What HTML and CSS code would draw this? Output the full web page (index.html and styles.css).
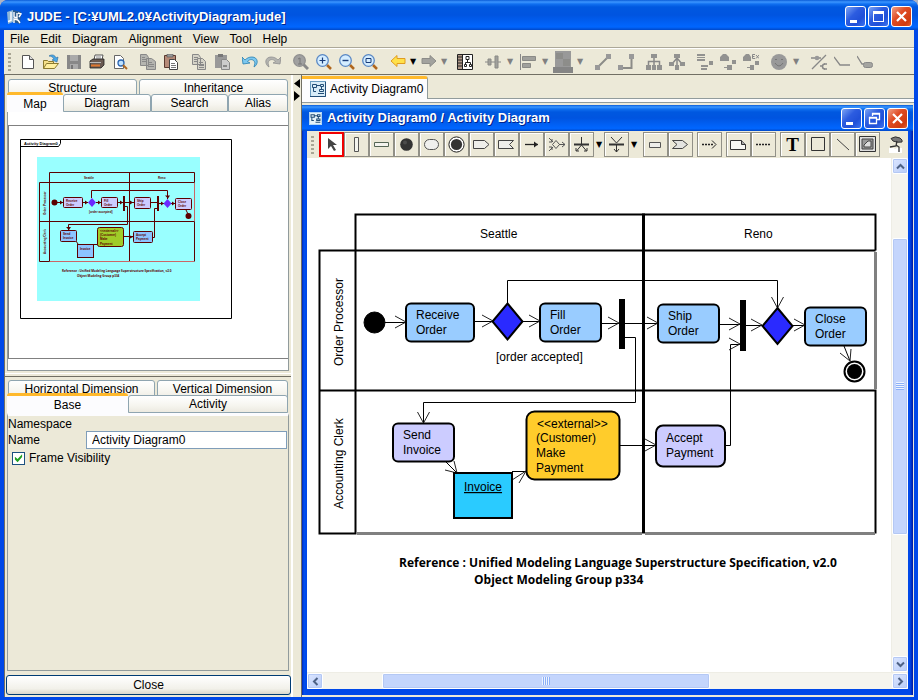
FILE: index.html
```html
<!DOCTYPE html>
<html lang="en">
<head>
<meta charset="utf-8">
<title>JUDE</title>
<link rel="stylesheet" href="styles.css">
</head>
<body>
<div class="window">
  <header class="titlebar">
    <svg class="app-icon" width="16" height="16" viewBox="0 0 16 16"><path d="M1 3l6-2v12l-5 2z" fill="#8fb8d8"/><path d="M7 1l8 2-1 12-7-2z" fill="#2a5a8c"/><path d="M5 3v8.500l-3 1M8 3v5l3 1V4M8 14v-4l4 1M12 4l3 1-2 3M12 11l2 3" fill="none" stroke="#fff" stroke-width="1.400"/></svg>
    <h1 class="title">JUDE - [C:¥UML2.0¥ActivityDiagram.jude]</h1>
    <div class="win-buttons">
      <button class="win-btn" aria-label="Minimize"><svg width="19" height="19" viewBox="0 0 19 19"><path d="M4 13h7v3H4z" fill="#fff"/></svg></button>
      <button class="win-btn" aria-label="Maximize"><svg width="19" height="19" viewBox="0 0 19 19"><path d="M4 4h11v11H4zM5 7v7h9V7z" fill="#fff" fill-rule="evenodd"/></svg></button>
      <button class="win-btn close" aria-label="Close window"><svg width="19" height="19" viewBox="0 0 19 19"><path d="M5 5l9 9M14 5l-9 9" stroke="#fff" stroke-width="2.200"/></svg></button>
    </div>
  </header>

  <div class="client">
    <nav class="menubar">
      <button>File</button><button>Edit</button><button>Diagram</button><button>Alignment</button><button>View</button><button>Tool</button><button>Help</button>
    </nav>

    <div class="toolbar">
      <span class="grip"></span>
      <div class="group">
        <button aria-label="New"><svg viewBox="0 0 16 16"><path d="M2.500 1.500h7l4 4v9h-11z" fill="#fff" stroke="#555"/><path d="M9.500 1.500v4h4" fill="#ddd" stroke="#555"/></svg></button>
        <button aria-label="Open"><svg viewBox="0 0 16 16"><path d="M.5 14.500v-8h4l1 1h5v2" fill="#f5e08a" stroke="#8a7a30"/><path d="M.5 14.500l3-5h12l-4 5z" fill="#fff0a0" stroke="#8a7a30"/><path d="M6 2c3-2 6-1 7 2l2-1-1 5-5-2 2-1C10 3 8 2 6 2z" fill="#49a8e8" stroke="#2a6a9c" stroke-width=".6"/></svg></button>
        <button aria-label="Save" disabled><svg viewBox="0 0 16 16"><path d="M1 1h14v14H1z" fill="#888"/><path d="M4 1h8v6H4zM4 10h8v5H4z" fill="#aaa"/><path d="M5 11h2v4H5z" fill="#777"/></svg></button>
        <button aria-label="Print"><svg viewBox="0 0 16 16"><path d="M5 6l1-5h8l-1 5" fill="#fff" stroke="#555"/><path d="M7 3h5M7 5h5" stroke="#888"/><path d="M1 7l3-2h11v6l-3 3H1z" fill="#6a5a52" stroke="#222" stroke-width=".8"/><path d="M1 8.500h11" stroke="#bbb"/><path d="M2 11.500h9" stroke="#e07830" stroke-width="2"/></svg></button>
        <button aria-label="Print preview"><svg viewBox="0 0 16 16"><path d="M2.500 1.500h6l3 3v10h-9z" fill="#fff" stroke="#666"/><circle cx="9" cy="9" r="3" fill="#bfe2ff" stroke="#2a64b0" stroke-width="1.300"/><path d="M11 11l4 4" stroke="#b06820" stroke-width="2"/></svg></button>
      </div>
      <div class="group">
        <button aria-label="Copy" disabled><svg viewBox="0 0 16 16"><path d="M.5.500h6l2 3v8h-8zM6.500 4.500h5l4 3v8h-9z" fill="#b5b5b0" stroke="#888"/><path d="M8 8.500h4M8 10.500h6M8 12.500h6M2 3.500h3M2 5.500h4M2 7.500h4" stroke="#888"/></svg></button>
        <button aria-label="Paste"><svg viewBox="0 0 16 16"><path d="M1.500 1.500h11v12h-11z" fill="#b58a78" stroke="#5a3a30"/><path d="M4 0h6v3H4z" fill="#999" stroke="#555" stroke-width=".6"/><path d="M6.500 5.500h5l3 3v7h-8z" fill="#fff" stroke="#444"/><path d="M8 9.500h4M8 11.500h5M8 13.500h5" stroke="#777"/></svg></button>
      </div>
      <div class="group">
        <button aria-label="Copy style" disabled><svg viewBox="0 0 16 16"><path d="M1.500.5h6l2 3v7h-8zM6.500 4.500h5l3 3v8h-8z" fill="#d5d3c8" stroke="#888"/><path d="M3 3.500h4M3 5.500h3M3 7.500h3M8 8.500h4M8 13.500h5" stroke="#888"/><path d="M8 10h5v2H8z" fill="#888"/></svg></button>
        <button aria-label="Paste style" disabled><svg viewBox="0 0 16 16"><path d="M1 1h12v13H1z" fill="#999"/><path d="M4 0h5v3H4z" fill="#777"/><path d="M7.500 5.500h5l3 3v7h-8z" fill="#ccc" stroke="#888"/><path d="M9 11h4v2H9z" fill="#888"/></svg></button>
      </div>
      <div class="group">
        <button aria-label="Undo"><svg viewBox="0 0 16 16"><path d="M0 3l1 7 7-1-2.500-1.500C8 4.500 12 5 13 9l-1 4c5-3 4-10-2-10-3 0-5 1-7 3z" fill="#7cc8f0" stroke="#2a80b0" stroke-width=".8"/></svg></button>
        <button aria-label="Redo" disabled><svg viewBox="0 0 16 16"><path d="M16 3l-1 7-7-1 2.500-1.500C8 4.500 4 5 3 9l1 4C-1 10 0 3 6 3c3 0 5 1 7 3z" fill="#b4b4b0" stroke="#909090" stroke-width=".8"/></svg></button>
      </div>
      <div class="group">
        <button aria-label="Actual size" disabled><svg viewBox="0 0 16 16"><path d="M10 10l5 5" stroke="#888" stroke-width="3"/><circle cx="6.500" cy="6.500" r="5.800" fill="#a0a0a0" stroke="#909090" stroke-width="1.300"/><path d="M5 5l2-1v6M5 10h4" fill="none" stroke="#777"/></svg></button>
        <button aria-label="Zoom in"><svg viewBox="0 0 16 16"><path d="M11 11l4 4" stroke="#b0661c" stroke-width="2.500"/><circle cx="6.500" cy="6.500" r="5.800" fill="#d4edff" stroke="#5a88c4" stroke-width="1.300"/><path d="M6.500 3.500v6M3.500 6.500h6" stroke="#1a3c78" stroke-width="1.200"/></svg></button>
        <button aria-label="Zoom out"><svg viewBox="0 0 16 16"><path d="M11 11l4 4" stroke="#b0661c" stroke-width="2.500"/><circle cx="6.500" cy="6.500" r="5.800" fill="#d4edff" stroke="#5a88c4" stroke-width="1.300"/><path d="M3.500 6.500h6" stroke="#1a3c78" stroke-width="1.400"/></svg></button>
        <button aria-label="Zoom to fit"><svg viewBox="0 0 16 16"><path d="M11 11l4 4" stroke="#b0661c" stroke-width="2.500"/><circle cx="6.500" cy="6.500" r="5.800" fill="#d4edff" stroke="#5a88c4" stroke-width="1.300"/><path d="M4 4.500h5v4H4z" fill="none" stroke="#1a3c78"/></svg></button>
      </div>
      <div class="group">
        <button aria-label="Back"><svg viewBox="0 0 16 16"><path d="M1 7L7 1.500v3h8v5H7v3z" fill="#ffe14a" stroke="#e09c20"/></svg></button>
        <button class="caret tight" aria-label="Back history">▼</button>
        <button aria-label="Forward" disabled><svg viewBox="0 0 16 16"><path d="M15 7L9 1.500v3H1v5h8v3z" fill="#a2a29e" stroke="#8c8c88"/></svg></button>
        <button class="caret tight" aria-label="Forward history" disabled>▼</button>
      </div>
      <div class="group">
        <button aria-label="Show in tree"><svg viewBox="0 0 16 16"><path d="M.5.5h15v15H.5z" fill="#fff" stroke="#222"/><path d="M1 1h4v14H1z" fill="#b09888"/><path d="M1 3h4M1 6h4M1 9h4M1 12h4M5.500 1v14" stroke="#222"/><path d="M9 2.500h3v3H9zM7.500 10.500h2v2h-2zM12.500 10.500h2v2h-2zM10.500 6v2M8.500 10V8.500h5V10" fill="none" stroke="#222"/></svg></button>
      </div>
      <div class="group">
        <button aria-label="Align centers" disabled><svg viewBox="0 0 16 16"><path d="M0 8h16" stroke="#888"/><path d="M3 5h3v6H3zM10 2h3v12h-3z" fill="#a0a09c" stroke="#8a8a86"/></svg></button>
        <button class="caret" aria-label="Align centers options" disabled>▼</button>
        <button aria-label="Align left" disabled><svg viewBox="0 0 16 16"><path d="M.5 0v16" stroke="#888"/><path d="M2.500 2.500h13v4h-13zM2.500 9.500h8v4h-8z" fill="#a0a09c" stroke="#8a8a86"/></svg></button>
        <button class="caret" aria-label="Align left options" disabled>▼</button>
        <button aria-label="Color" disabled><svg class="wide" viewBox="0 0 20 22"><path d="M2 0h16v16H2z" fill="#999"/><path d="M3 2h7v6H3zM10 8h7v7h-7z" fill="#8d8d8a"/><path d="M0 16h20v6H0z" fill="#858585"/></svg></button>
        <button class="caret" aria-label="Color options" disabled>▼</button>
      </div>
      <div class="group">
        <button aria-label="Line" disabled><svg viewBox="0 0 16 16"><path d="M3 13L13 3" stroke="#8c8c88" stroke-width="2"/><path d="M0 11h5v5H0zM11 0h5v5h-5z" fill="#999"/></svg></button>
        <button aria-label="Right angle line" disabled><svg viewBox="0 0 16 16"><path d="M3 14h10.500V3" fill="none" stroke="#8c8c88" stroke-width="2"/><path d="M0 11h5v5H0zM11 0h5v5h-5z" fill="#999"/></svg></button>
      </div>
      <div class="group">
        <button aria-label="Tree layout" disabled><svg viewBox="0 0 16 16"><path d="M8 4v8M2.500 12V7.500h11V12" fill="none" stroke="#888" stroke-width="1.500"/><path d="M5 0h6v4H5zM0 11h5v5H0zM6 11h4v5H6zM11 11h5v5h-5z" fill="#929290"/></svg></button>
        <button aria-label="Radial layout" disabled><svg viewBox="0 0 16 16"><path d="M8 4v8M8 4l-5 6M8 4l5 6" fill="none" stroke="#888" stroke-width="1.500"/><path d="M5 0h6v4H5zM0 8h5v4H0zM6 11h4v5H6zM11 8h5v4h-5z" fill="#929290"/></svg></button>
      </div>
      <div class="group">
        <button aria-label="Layout attributes" disabled><svg viewBox="0 0 16 16"><path d="M0 0h8v2H0zM0 3h8v1H0zM0 5h8v2H0zM4 11h7v2H4zM4 14h6v2H4zM12 7h4v4h-4z" fill="#929290"/></svg></button>
        <button aria-label="Layout notes" disabled><svg viewBox="0 0 16 16"><path d="M0 7V3l3-3h3l3 3v4zM12 6h4v4h-4zM7 11h5v5H7zM4 13h3v1H4z" fill="#929290"/></svg></button>
        <button aria-label="Layout extension" disabled><svg viewBox="0 0 16 16"><path d="M0 7V3l3-3h3l2 3v4zM12 7h4v4h-4zM7 11h4v5H7zM4 13h3v1H4z" fill="#929290"/><path d="M12 .5H9.500v4H12M9.500 2.500h2M13 1l3 3.500M16 1l-3 3.500" fill="none" stroke="#888"/></svg></button>
      </div>
      <div class="group">
        <button aria-label="Icon" disabled><svg viewBox="0 0 16 16"><circle cx="8" cy="8" r="8" fill="#999"/><path d="M4 6q1-2 2 0M10 6q1-2 2 0M4 9q4 6 8 0" fill="none" stroke="#777"/></svg></button>
        <button class="caret" aria-label="Icon options" disabled>▼</button>
      </div>
      <div class="group">
        <button aria-label="Connector style" disabled><svg viewBox="0 0 16 16"><path d="M1 15L15 1M0 4h4M8 4h2M9 12h3M13 10h3M13 15h3" stroke="#888" stroke-width="1.300"/><circle cx="6" cy="4" r="2.300" fill="#999"/><path d="M14 10a2.500 2.500 0 000 5" fill="none" stroke="#888" stroke-width="1.500"/></svg></button>
        <button aria-label="Angle" disabled><svg viewBox="0 0 16 16"><path d="M0 3l6 8h10" fill="none" stroke="#888" stroke-width="1.300"/></svg></button>
        <button aria-label="Angle with label" disabled><svg viewBox="0 0 16 16"><path d="M0 2l5 8h3" fill="none" stroke="#888" stroke-width="1.300"/><rect x="6.500" y="8.500" width="9" height="5" rx="2" fill="#a4a4a0" stroke="#888"/></svg></button>
      </div>
    </div>

    <div class="body">
      <aside class="side">
        <section class="pane pane-map">
          <div class="tabs back"><button class="t-128">Structure</button><button class="t-rest">Inheritance</button></div>
          <div class="tabs front"><button class="t-56 selected">Map</button><button class="t-88">Diagram</button><button class="t-76">Search</button><button class="t-rest">Alias</button></div>
          <div class="map-panel">
            <div class="map-view">
              <svg class="mini" width="226" height="200" viewBox="10 126 226 200">
                <rect x="38" y="157" width="163" height="144" fill="#9ff"/>
                <path d="M21.500 139.500h211v179h-211zM21.500 146.500h38l2-3v-4" fill="none" stroke="#000"/>
                <text x="25" y="145" class="tiny dark">Activity Diagram0</text>
                <g class="mini-lines">
                  <path d="M50.500 261.500v-89h145v10M40.500 182.500h155M40.500 182.500v79h10M40.500 221.500h155v40M130.500 172.500v89"/>
                  <path d="M195.500 183v38M51 261.500h144" class="pink"/>
                  <path d="M58 202.500h6M83 202.500h6M97 202.500h5M118 202.500h6M126 202.500h9M151 202.500h7M160 203.500h5M172 203.500h4M92.500 198v-7.500h76V199M126 206.500h2.500v18h-59v6M124 236.500h10M153 237.500h2.500v-29h3M77 241l2 3M94 244.500h5M187 210l2 4"/>
                </g>
                <g class="mini-heads">
                  <path d="M61 200.500l3 2-3 2zM86 200.500l3 2-3 2zM99 200.500l3 2-3 2zM121 200.500l3 2-3 2zM131 200.500l3 2-3 2zM162 201.500l3 2-3 2zM173 201.500l3 2-3 2zM166 195.500h5l-2 3zM67 227h5l-2 3zM130 235l4 2-4 2zM124 196h2v15h-2zM158 196h2v15h-2z"/>
                  <circle cx="55.500" cy="202.500" r="3"/><circle cx="189.500" cy="216" r="3"/>
                </g>
                <g class="mini-nodes">
                  <rect x="64.500" y="197.500" width="19" height="10" rx="1"/><rect x="102.500" y="197.500" width="16" height="10" rx="1"/><rect x="135.500" y="197.500" width="16" height="11" rx="1"/><rect x="176.500" y="198.500" width="16" height="11" rx="1"/>
                  <rect class="b" x="61.500" y="230.500" width="16" height="11" rx="1"/><rect class="b" x="134.500" y="231.500" width="19" height="11" rx="1"/><rect class="b" x="78.500" y="244.500" width="16" height="13"/>
                  <rect class="g" x="98.500" y="227.500" width="26" height="19" rx="2"/>
                  <path class="d" d="M93 198l4 4.500-4 4.500-4-4.500zM168.500 199l4 4.500-4 4.500-4-4.500z"/>
                </g>
                <g class="tiny">
                  <text x="85" y="179">Seattle</text><text x="159" y="179">Reno</text>
                  <text x="67" y="202">Receive</text><text x="67" y="206">Order</text><text x="105" y="202">Fill</text><text x="105" y="206">Order</text>
                  <text x="138" y="202">Ship</text><text x="138" y="206">Order</text><text x="179" y="203">Close</text><text x="179" y="207">Order</text>
                  <text x="90" y="213">[order accepted]</text>
                  <text x="64" y="235">Send</text><text x="64" y="239">Invoice</text><text x="81" y="250">Invoice</text>
                  <text x="101" y="232">&lt;&lt;external&gt;&gt;</text><text x="101" y="236">(Customer)</text><text x="101" y="240">Make</text><text x="101" y="245">Payment</text>
                  <text x="137" y="236">Accept</text><text x="137" y="240">Payment</text>
                  <text transform="translate(47 215) rotate(-90)">Order Processor</text><text transform="translate(47 254) rotate(-90)">Accounting Clerk</text>
                  <text class="ref" x="63" y="272">Reference : Unified Modeling Language Superstructure Specification, v2.0</text>
                  <text class="ref" x="78" y="277">Object Modeling Group p334</text>
                </g>
              </svg>
            </div>
          </div>
        </section>
        <div class="h-split"></div>
        <section class="pane pane-props">
          <div class="tabs back"><button class="t-146">Horizontal Dimension</button><button class="t-rest">Vertical Dimension</button></div>
          <div class="tabs front"><button class="t-121 selected">Base</button><button class="t-rest">Activity</button></div>
          <form class="props">
            <div class="row">Namespace</div>
            <div class="row"><label for="name">Name</label><input id="name" type="text" value="Activity Diagram0"></div>
            <label class="check"><input type="checkbox" checked>Frame Visibility</label>
          </form>
        </section>
        <div class="close-row"><button class="close-btn">Close</button></div>
      </aside>

      <div class="v-split">
        <svg width="6" height="22" viewBox="0 0 6 22"><path d="M6 0v9L0 4.500zM0 12v10l6-5z"/></svg>
      </div>

      <main class="main">
        <div class="doc-tabs">
          <button class="doc-tab"><svg width="16" height="16" viewBox="0 0 16 16"><rect x=".5" y=".5" width="15" height="15" fill="#d8ecf8" stroke="#6a9cc0"/><path d="M15.500 1v14.500H0" fill="none" stroke="#234e78"/><path d="M2.500 3.500h4v3h-4zM7 4.500h3M10.500 3.500h3v2h-3zM11.500 6v2M9.500 8.500h4v2h-4zM3.500 7v3.500H6M8 12.500h6" fill="none" stroke="#234e78"/></svg>Activity Diagram0</button>
        </div>
        <div class="doc-gap"></div>
        <section class="inner">
          <header class="titlebar small">
            <svg class="app-icon" width="13" height="13" viewBox="0 0 16 16"><rect x=".5" y=".5" width="15" height="15" fill="#e4f2fa" stroke="#b8dcf4"/><path d="M2.500 3.500h4v3h-4zM7 4.500h3M10.500 3.500h3v2h-3zM11.500 6v2M9.500 8.500h4v2h-4zM3.500 7v3.500H6M8 12.500h6" fill="none" stroke="#234e78" stroke-width="1.300"/></svg>
            <h2 class="title">Activity Diagram0 / Activity Diagram</h2>
            <div class="win-buttons">
              <button class="win-btn" aria-label="Minimize diagram"><svg width="19" height="19" viewBox="0 0 19 19"><path d="M4 13h7v3H4z" fill="#fff"/></svg></button>
              <button class="win-btn" aria-label="Restore diagram"><svg width="19" height="19" viewBox="0 0 19 19"><path d="M7.500 7V4.500h7v6H12M7 5h8M4.500 8.500h7v6h-7zM4 9h8" fill="none" stroke="#fff" stroke-width="1.300"/></svg></button>
              <button class="win-btn close" aria-label="Close diagram"><svg width="19" height="19" viewBox="0 0 19 19"><path d="M5 5l9 9M14 5l-9 9" stroke="#fff" stroke-width="2.200"/></svg></button>
            </div>
          </header>
          <div class="palette">
            <span class="grip"></span>
            <div class="tools">
              <button class="active" aria-label="Select"><svg viewBox="0 0 17 17"><path d="M5 2v11l3-3 3 5 2-1-3-5h4z" fill="#444"/></svg></button>
              <button aria-label="Vertical partition"><svg viewBox="0 0 17 17"><path d="M6.500 1.500h4v14h-4z" fill="#f4f4ee" stroke="#555"/></svg></button>
              <button aria-label="Horizontal partition"><svg viewBox="0 0 17 17"><path d="M1.500 6.500h14v4h-14z" fill="#f4f4ee" stroke="#565"/></svg></button>
              <button aria-label="Initial node"><svg viewBox="0 0 17 17"><circle cx="8.500" cy="8.500" r="6.300" fill="#333"/><circle cx="7" cy="6.500" r="2" fill="#4c4c4c"/></svg></button>
              <button aria-label="Action"><svg viewBox="0 0 17 17"><rect x="1.500" y="3.500" width="14" height="10" rx="5" fill="#f0f0ee" stroke="#555"/></svg></button>
              <button aria-label="Final node"><svg viewBox="0 0 17 17"><circle cx="8.500" cy="8.500" r="7.600" fill="#fff" stroke="#222"/><circle cx="8.500" cy="8.500" r="5.600" fill="#333"/></svg></button>
              <button aria-label="Send signal"><svg viewBox="0 0 17 17"><path d="M.5 4.500h11l4.500 4-4.500 4H.5z" fill="#eeeeea" stroke="#444"/></svg></button>
              <button aria-label="Receive signal"><svg viewBox="0 0 17 17"><path d="M.5 4.500h15l-4 4 4 4H.5z" fill="#eeeeea" stroke="#444"/></svg></button>
              <button aria-label="Flow"><svg viewBox="0 0 17 17"><path d="M2 8.500h13" stroke="#222" stroke-width="1.300"/><path d="M11 5.500l4 3-4 3z" fill="#222"/></svg></button>
              <button aria-label="Decision"><svg viewBox="0 0 17 17"><path d="M1 2l4 4M1 15l4-4M4.500 8.500l3.500-4 3.500 4-3.500 4zM11 8.500h6M14 6l3 2.500-3 2.500M4 3v3H1M1 11h3v3" fill="none" stroke="#555"/></svg></button>
              <button aria-label="Fork"><svg viewBox="0 0 17 17"><path d="M8.500 1v8M8.500 9l-5 6M8.500 9l5 6M3 12v3h3M14 12v3h-3" fill="none" stroke="#333"/><path d="M1 8.500h15" stroke="#333" stroke-width="2"/></svg></button>
              <button class="caret" aria-label="Fork options">▼</button>
              <button aria-label="Join"><svg viewBox="0 0 17 17"><path d="M3 1l5.500 6L14 1M8.500 8v8M6 13l2.500 3 2.500-3" fill="none" stroke="#333"/><path d="M1 8.500h15" stroke="#333" stroke-width="2"/></svg></button>
              <button class="caret" aria-label="Join options">▼</button>
            </div>
            <div class="tools">
              <button aria-label="Object node"><svg viewBox="0 0 17 17"><path d="M2.500 6.500h11v5h-11z" fill="#eeeeea" stroke="#555"/></svg></button>
              <button aria-label="Process"><svg viewBox="0 0 17 17"><path d="M.5 4.500h10l5 4-5 4H.5l4.500-4z" fill="#e4e4e0" stroke="#444"/></svg></button>
            </div>
            <div class="tools"><button aria-label="Dependency"><svg viewBox="0 0 17 17"><path d="M1 8.500h12" stroke="#222" stroke-width="1.500" stroke-dasharray="2 1"/><path d="M11 4.500l4 4-4 4" fill="none" stroke="#222"/></svg></button></div>
            <div class="tools">
              <button aria-label="Note"><svg viewBox="0 0 17 17"><path d="M.5 4.500h11l4 4v5H.5z" fill="#f8f8f4" stroke="#333"/><path d="M11.500 4.500v4h4" fill="#aaa" stroke="#333"/></svg></button>
              <button aria-label="Note anchor"><svg viewBox="0 0 17 17"><path d="M1 8.500h15" stroke="#222" stroke-width="1.500" stroke-dasharray="2 1"/></svg></button>
            </div>
            <div class="tools">
              <button class="text-tool" aria-label="Text">T</button>
              <button aria-label="Rectangle"><svg viewBox="0 0 17 17"><path d="M2.500 1.500h13v13h-13z" fill="none" stroke="#333"/></svg></button>
              <button aria-label="Free line"><svg viewBox="0 0 17 17"><path d="M3 3l12 11" stroke="#444"/></svg></button>
              <button aria-label="Image"><svg viewBox="0 0 17 17"><path d="M.5.500h16v15H.5z" fill="#ddd" stroke="#333"/><path d="M3 3h11v10H3z" fill="#999" stroke="#444"/><path d="M5 11V9l4-4h3v6z" fill="#ddd" stroke="#444"/></svg></button>
            </div>
            <button class="flat" aria-label="Lock tool"><svg viewBox="0 0 17 17"><path d="M1 12h5l1 1 2-1h5v5H1z" fill="#fff"/><path d="M3 2.500q4-3 9-.5 3 2 2 4-5 1-9-1z" fill="#777" stroke="#333"/><path d="M9 5l-1 5-6 1M8 9l3 2v5" fill="none" stroke="#333" stroke-width="1.300"/></svg></button>
          </div>
          <div class="canvas-grid">
            <div class="canvas">
              <svg class="diagram" width="584" height="516" viewBox="307 158 584 516">
                <g class="lanes">
                  <path d="M355.500 534.500v-320h520v36M318.500 250.500h557M319.500 250.500v283h36M319.500 390.500h556v143"/>
                  <path d="M643.500 213.500v320" stroke-width="3"/>
                  <path class="soft" d="M875.500 252v137M357 533.500h285M645 533.500h230"/>
                </g>
                <g class="edges">
                  <path d="M385 322.500h20M474 321.500h19M523 321.500h17M601 323.500h18M625 323.500h33M719 324.500h21M746 325.500h16M793 325.500h12M507.500 303v-22.500h270V308M625 337.500h10.500v65h-212V423M725 445.500h5.500v-101h10M620 445.500h36M446 462l11 11M512 471.500h14M844 346l6 15"/>
                </g>
                <g class="heads">
                  <path d="M395 316l11 6-11 6M482 315l11 6-11 6M529 315l11 6-11 6M608 317l11 6-11 6M647 317l11 6-11 6M729 318l11 6-11 6M751 319l11 6-11 6M794 319l11 6-11 6M729 338l11 6-11 6M645 439l11 6-11 6M771.500 297l6 11 6-11M417.500 412l6 11 6-11M445 470l12 3-3-12M512 480l14-9-7 12M840 353l10 8 1-12"/>
                </g>
                <g class="nodes">
                  <circle cx="374.500" cy="322.500" r="10.500" fill="#000" stroke-width="1"/>
                  <rect x="406" y="303.500" width="68" height="38" rx="5"/>
                  <rect x="540" y="303.500" width="61" height="38" rx="5"/>
                  <rect x="658" y="304.500" width="61" height="38" rx="5"/>
                  <rect x="805" y="307.500" width="61" height="38" rx="5"/>
                  <path class="dia" d="M507.500 303.500l15 18-15 18-15-18zM777.500 308l15 18-15 18-15-18z"/>
                  <rect class="lilac" x="393" y="423.500" width="61" height="38" rx="5"/>
                  <rect class="lilac" x="656" y="425.500" width="69" height="41" rx="7"/>
                  <rect class="gold" x="526.500" y="411.500" width="93" height="68" rx="8"/>
                  <rect class="cyan" x="454" y="473" width="58" height="45"/>
                  <path d="M619 299h6v50h-6zM740 300h6v51h-6z" fill="#000" stroke="none"/>
                  <circle cx="854.500" cy="371.500" r="10" fill="#fff"/><circle cx="854.500" cy="371.500" r="7.500" fill="#000" stroke="none"/>
                </g>
                <g class="labels">
                  <text x="480" y="238">Seattle</text><text x="744" y="238">Reno</text>
                  <text x="416" y="319">Receive</text><text x="416" y="334">Order</text>
                  <text x="550" y="319">Fill</text><text x="550" y="334">Order</text>
                  <text x="668" y="320">Ship</text><text x="668" y="335">Order</text>
                  <text x="815" y="323">Close</text><text x="815" y="338">Order</text>
                  <text x="496" y="361">[order accepted]</text>
                  <text x="403" y="439">Send</text><text x="403" y="454">Invoice</text>
                  <text x="464" y="491" text-decoration="underline">Invoice</text>
                  <text x="537" y="428">&lt;&lt;external&gt;&gt;</text><text x="536" y="442">(Customer)</text><text x="536" y="457">Make</text><text x="536" y="472">Payment</text>
                  <text x="666" y="442">Accept</text><text x="666" y="457">Payment</text>
                  <text transform="translate(343 366) rotate(-90)">Order Processor</text>
                  <text transform="translate(343 509) rotate(-90)">Accounting Clerk</text>
                  <text class="ref" x="399" y="567">Reference : Unified Modeling Language Superstructure Specification, v2.0</text>
                  <text class="ref" x="474" y="584">Object Modeling Group p334</text>
                </g>
              </svg>
            </div>
            <div class="scroll v">
              <button aria-label="Scroll up"><svg width="9" height="9" viewBox="0 0 9 9"><path d="M1 6.500l3.500-3.500 3.500 3.500"/></svg></button>
              <div class="track before"></div><div class="thumb"></div><div class="track after"></div>
              <button aria-label="Scroll down"><svg width="9" height="9" viewBox="0 0 9 9"><path d="M1 2.500L4.500 6 8 2.500"/></svg></button>
            </div>
            <div class="scroll h">
              <button aria-label="Scroll left"><svg width="9" height="9" viewBox="0 0 9 9"><path d="M6.500 1L3 4.500 6.500 8"/></svg></button>
              <div class="track before"></div><div class="thumb"></div><div class="track after"></div>
              <button aria-label="Scroll right"><svg width="9" height="9" viewBox="0 0 9 9"><path d="M2.500 1L6 4.500 2.500 8"/></svg></button>
            </div>
          </div>
        </section>
      </main>
    </div>
  </div>
</div>
</body>
</html>
```
FILE: styles.css
```css
* { box-sizing: border-box; }

body {
  margin: 0;
  background: #aeb4c4;
  color: #000;
  font: 12px/16px "Liberation Sans", Arial, sans-serif;
}

button {
  margin: 0;
  padding: 0;
  border: 0;
  background: none;
  color: inherit;
  font: inherit;
}

svg { display: block; flex: none; }

.window {
  display: flex;
  flex-direction: column;
  height: 100vh;
  min-height: 500px;
  overflow: hidden;
  border-radius: 8px 8px 0 0;
  background: #0048e8;
}

/* Title bars */
.titlebar {
  display: flex;
  flex: none;
  align-items: center;
  gap: 5px;
  height: 30px;
  padding: 3px 6px 0 6px;
  background: linear-gradient(#0a5cd8 0, #3c96ff 2px, #1070f0 4px, #0058e0 7px, #0054e0 50%, #0062f8 80%, #0066ff 90%, #0048c8 100%);
}

.titlebar.small {
  height: 26px;
  padding: 0 0 0 2px;
  border-radius: 0;
}

.title {
  flex: 1;
  margin: 0;
  color: #fff;
  font: bold 13px/16px "Liberation Sans", Arial, sans-serif;
  text-shadow: 1px 1px #00248c;
  white-space: nowrap;
}

.win-buttons { display: flex; gap: 2px; }

.win-btn {
  width: 21px;
  height: 21px;
  border: 1px solid #fff;
  border-radius: 3px;
  background: linear-gradient(135deg, #7ca4f4, #2c5ce0 40%, #2050d8 70%, #3c74f0);
}

.win-btn.close { background: linear-gradient(135deg, #f0a088, #e04c24 40%, #d03c10 80%, #e06030); }

.client {
  display: flex;
  flex: 1;
  flex-direction: column;
  min-height: 0;
  margin: 0 4px 3px;
  background: #ece9d8;
}

.menubar {
  display: flex;
  gap: 11px;
  height: 18px;
  padding: 0 6px;
  border-bottom: 1px solid #aca899;
}

/* Main toolbar */
.toolbar {
  display: flex;
  align-items: center;
  gap: 5px;
  height: 27px;
  padding-left: 4px;
  border-top: 1px solid #fff;
  border-bottom: 1px solid #716f64;
}

.grip {
  width: 3px;
  height: 18px;
  background: repeating-linear-gradient(#a8a594 0 2px, transparent 2px 4px);
}

.toolbar .group { display: flex; }
.toolbar button { display: flex; align-items: center; justify-content: center; width: 23px; height: 24px; }
.toolbar svg { width: 16px; height: 16px; }
.toolbar svg.wide { width: 20px; height: 22px; }

.toolbar .caret, .palette .caret {
  width: 12px;
  border: 0;
  background: none;
  color: #000;
  font: 8px/12px "DejaVu Sans", sans-serif;
}

.toolbar .caret.tight { width: 8px; }
.toolbar .caret:disabled { color: #808080; }

/* Side panel */
.body { display: flex; flex: 1; min-height: 0; }

.side {
  display: flex;
  flex: none;
  flex-direction: column;
  width: 287px;
  border-left: 1px solid #716f64;
}

.pane { display: flex; flex-direction: column; min-height: 0; padding: 4px 2px 0; }
.pane-map { flex: 1 1 296px; }
.pane-props { flex: 1 1 294px; padding-top: 3px; }

.tabs { display: flex; flex: none; padding: 0 1px; }
.tabs button {
  border: 1px solid #8fa5b0;
  border-radius: 3px 3px 0 0;
  background: linear-gradient(#fff, #f6f5ef 60%, #eceae0);
}

.tabs.back { gap: 2px; }
.tabs.back button { height: 20px; padding-bottom: 3px; line-height: 14px; }
.tabs.front { position: relative; align-items: flex-end; height: 20px; margin-top: -7px; padding: 0 1px 0 0; }
.tabs.front button { height: 18px; line-height: 16px; }
.tabs .t-rest { flex: 1; }
.tabs .t-56 { width: 56px; }
.tabs .t-76 { width: 77px; }
.tabs .t-88 { width: 88px; }
.tabs .t-121 { width: 121px; }
.tabs .t-128 { width: 129px; }
.tabs .t-146 { width: 147px; }

.tabs.front .selected {
  height: 20px;
  border: 0;
  border-top: 3px solid #ffb92c;
  background: #fcfcfe;
}

.map-panel {
  flex: 1;
  min-height: 0;
  padding: 13px 0 11px 0;
  border: 1px solid #919b9c;
  border-top: 0;
  background: #fff;
}

.map-view { height: 100%; overflow: hidden; border: 1px solid #808080; border-right: 0; }

.mini-lines { fill: none; stroke: #5c0000; }
.mini-lines .pink { stroke: #cc6666; }
.mini-heads { fill: #5c0000; }
.mini-nodes { fill: #ccf; stroke: #5c0000; }
.mini-nodes .b { fill: #8cc4ff; }
.mini-nodes .g { fill: #a0cc28; }
.mini-nodes .d { fill: #6a2aff; stroke-width: 0; }
.tiny { fill: #5c0000; font: bold 3px "Liberation Sans", sans-serif; }
.tiny.dark { fill: #000; font-size: 4px; }
.tiny .ref { font-family: "Open Sans", sans-serif; }

.h-split {
  flex: none;
  height: 6px;
  border-top: 2px solid #ece9d8;
  border-bottom: 1px solid #716f64;
  box-shadow: inset 0 1px #fff;
}

.props {
  flex: 1;
  min-height: 0;
  padding: 0 1px 0 0;
  border: 1px solid #919b9c;
  border-top: 3px solid #fcfcfe;
}

.row { display: flex; align-items: center; height: 16px; }
.row label { width: 78px; }
.row input {
  flex: 1;
  min-width: 0;
  height: 18px;
  padding: 0 5px;
  border: 1px solid #7f9db9;
  background: #fff;
  font: inherit;
}

.check { display: flex; align-items: center; gap: 4px; height: 20px; padding-left: 4px; }
.check input {
  appearance: none;
  display: grid;
  place-items: center;
  width: 13px;
  height: 13px;
  margin: 0;
  border: 1px solid #1c5180;
  background: #fff;
}
.check input:checked::before {
  content: "";
  width: 9px;
  height: 9px;
  background: #21a121;
  clip-path: polygon(10% 35%, 40% 62%, 90% 8%, 90% 40%, 40% 98%, 10% 68%);
}

.close-row { display: flex; flex: none; height: 26px; padding: 4px 0 2px 1px; }
.close-btn {
  flex: 1;
  border: 1px solid #003c74;
  border-radius: 3px;
  background: linear-gradient(#fff, #f2f1ea 70%, #dcd8cc);
}

.v-split { flex: none; width: 10px; padding: 4px 0 0 1px; border-left: 2px solid #fff; }

/* Document area */
.main {
  display: flex;
  flex: 1;
  flex-direction: column;
  min-width: 0;
  border-left: 1px solid #716f64;
}

.doc-tabs { display: flex; flex: none; height: 24px; padding-top: 1px; border-bottom: 1px solid #919b9c; }
.doc-tab {
  display: flex;
  align-items: center;
  gap: 4px;
  height: 23px;
  padding: 0 4px 0 8px;
  border-top: 3px solid #ffb92c;
  border-right: 1px solid #919b9c;
  border-radius: 0 3px 0 0;
  background: #fcfcfe;
}

.doc-gap { flex: none; height: 6px; border-top: 3px solid #fcfcfe; border-bottom: 2px solid #ece9d8; background: #919b9c; }

.inner {
  display: flex;
  flex: 1;
  flex-direction: column;
  min-height: 0;
  margin: 0 1px 2px 0;
  padding: 0 5px 6px;
  background: linear-gradient(90deg, #0024b8 0, #0050f0 2px, #0048e8 4px, #0048e8 calc(100% - 3px), #0018a0 100%);
}

.inner .titlebar { margin: 0 -5px; padding: 0 5px 0 7px; }

.palette { display: flex; flex: none; align-items: center; gap: 4px; height: 27px; overflow: hidden; padding-left: 4px; background: #ece9d8; }
.palette .grip { margin-right: 1px; }
.tools { display: flex; flex: none; }
.palette button { display: flex; flex: none; align-items: center; justify-content: center; width: 25px; height: 25px; border: 1px solid #919087; box-shadow: inset 1px 1px #fff; }
.palette button.caret { width: 10px; border: 0; box-shadow: none; }
.palette svg { width: 17px; height: 17px; }
.palette button.active { border: 2px solid #f00000; background: #fff; }
.palette button.flat { width: 24px; border: 0; box-shadow: none; }
.palette .text-tool { font: bold 19px/21px "Liberation Serif", serif; }

.canvas-grid {
  display: grid;
  flex: 1;
  grid-template: minmax(0, 1fr) 17px / minmax(0, 1fr) 17px;
  min-height: 0;
}

.canvas { overflow: hidden; background: #fff; }

.lanes, .edges, .heads { fill: none; stroke: #000; }
.lanes { stroke-width: 2; }
.lanes .soft { stroke: #808080; stroke-width: 3; }
.heads { stroke: #222; }
.nodes { fill: #9cf; stroke: #000; stroke-width: 2; }
.nodes .dia { fill: #2a2aff; }
.nodes .lilac { fill: #ccf; }
.nodes .gold { fill: #ffcc2b; }
.nodes .cyan { fill: #2acbff; }
.labels { font: 12px "Liberation Sans", Arial, sans-serif; }
.labels .ref { font: bold 12px "Open Sans", sans-serif; }

.scroll { display: flex; background: #f5f4ee; }
.scroll.v { flex-direction: column; border-left: 1px solid #eeede5; }
.scroll.h { grid-column: 1 / -1; border-top: 1px solid #eeede5; }
.scroll button, .scroll .thumb {
  display: flex;
  align-items: center;
  justify-content: center;
  border: 1px solid #fff;
  border-radius: 2px;
  background: linear-gradient(135deg, #dce6ff, #b8ccf8);
  box-shadow: inset 0 0 0 1px #b4c8f4;
}
.scroll button { flex: none; width: 16px; height: 16px; }
.scroll svg { fill: none; stroke: #4d6185; stroke-width: 2; }
.scroll .thumb { background: #c4d5fc; }
.scroll .thumb::before { content: ""; width: 8px; height: 8px; background: repeating-linear-gradient(#eef4fe 0 1px, #8cb0f8 1px 2px); }
.scroll.h .thumb::before { background: repeating-linear-gradient(90deg, #eef4fe 0 1px, #8cb0f8 1px 2px); }
.scroll.v .before { flex: 64; }
.scroll.v .thumb { flex: 296; }
.scroll.v .after { flex: 122; }
.scroll.h .before { flex: 59; }
.scroll.h .thumb { flex: 327; }
.scroll.h .after { flex: 183; }
```
